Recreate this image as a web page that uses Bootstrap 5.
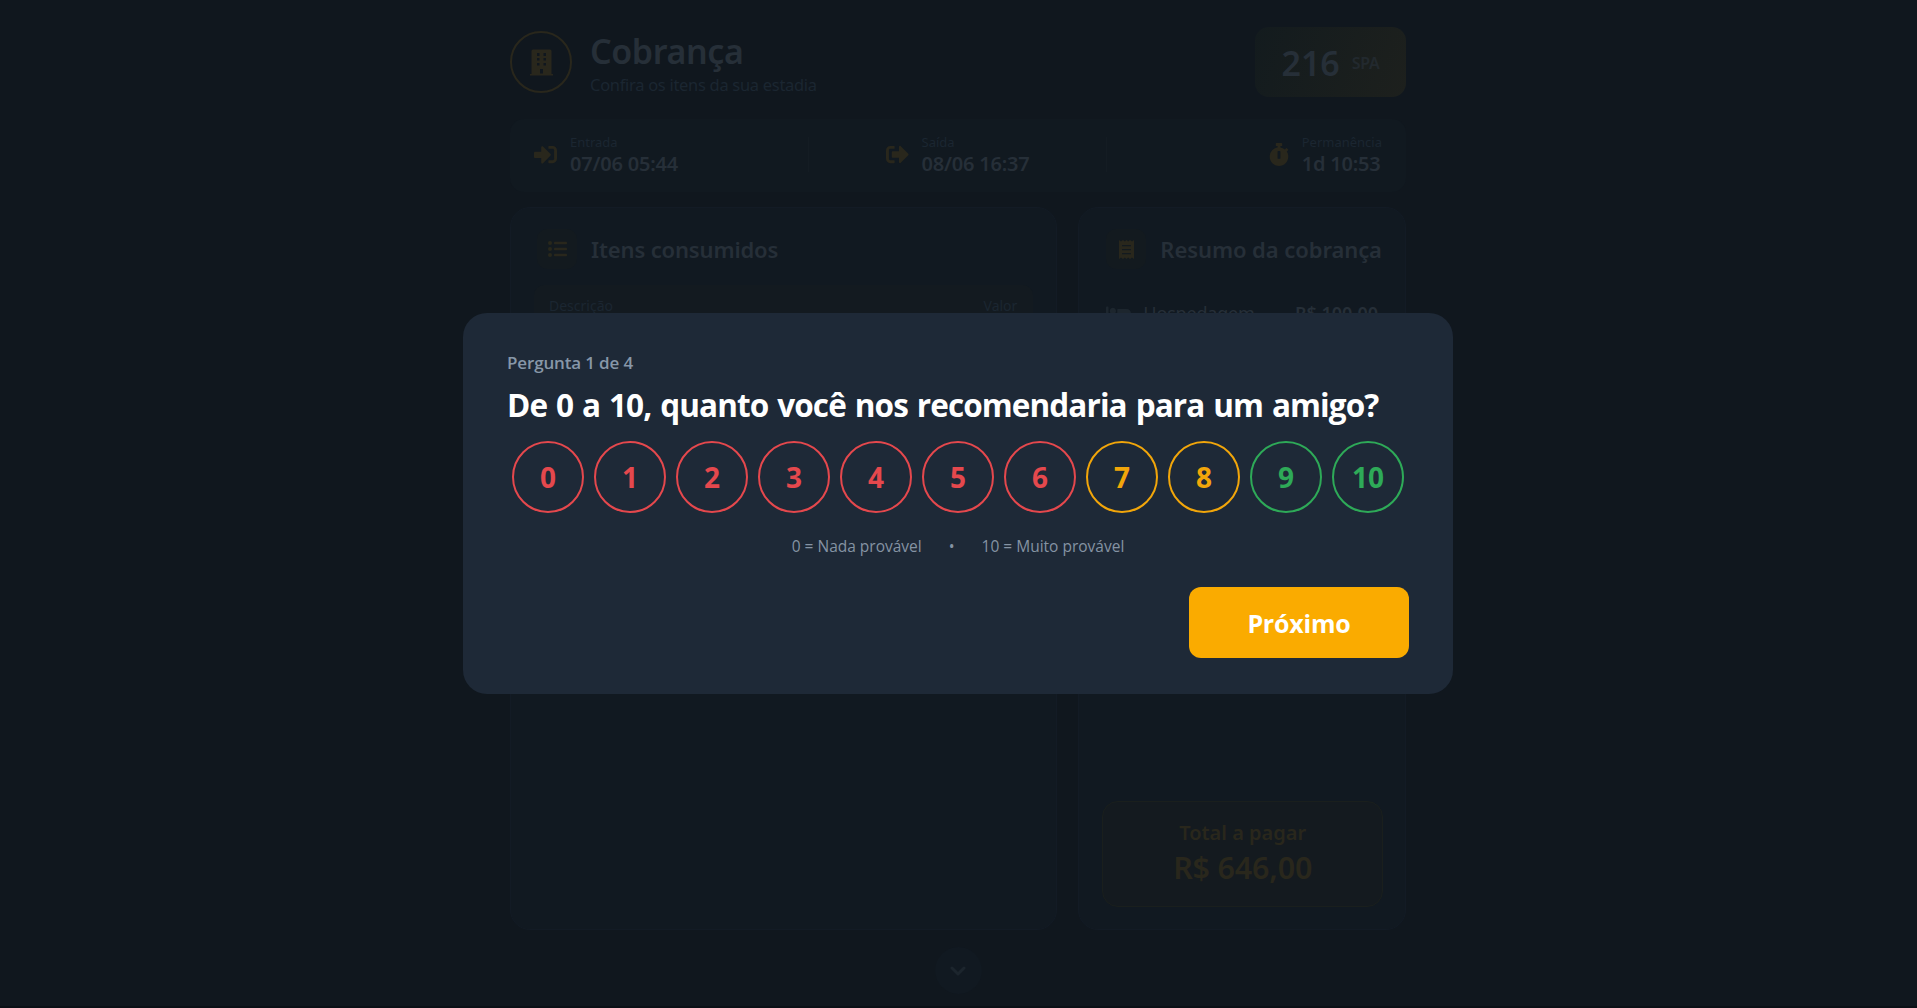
<!DOCTYPE html>
<html lang="pt-BR">
<head>
<meta charset="utf-8">
<meta name="viewport" content="width=device-width, initial-scale=1">
<title>Cobrança</title>
<link href="https://cdn.jsdelivr.net/npm/bootstrap@5.3.0/dist/css/bootstrap.min.css" rel="stylesheet">
<style>
body{background:#10171e;font-family:"Noto Sans","Open Sans",sans-serif;color:#262f38;height:100vh;overflow:hidden;border-bottom:2px solid #0b1016}
.page-wrap{width:897px;padding:27px 1px 0 0}
.gold{color:#29271c}
.dim{color:#1b2631}
.lh-1x{line-height:1;white-space:nowrap}
.logo-ring{width:62px;height:62px;border:2px solid #29271c}
.head-text{margin-left:18px;padding-top:2px}
.page-title{font-size:34px;font-weight:600;line-height:44px;letter-spacing:-.4px}
.page-sub{font-size:16.500px;line-height:24px;letter-spacing:-.3px}
.room-pill{width:151px;height:70px;gap:12px;border-radius:14px;background:linear-gradient(110deg,#131b1e,#1d201d);padding-top:1px}
.room-no{font-size:34px;font-weight:600}
.room-kind{font-size:16px;font-weight:600;letter-spacing:-.3px;color:#22292e}
.info-bar{height:73px;margin-top:22px;border-radius:14px;background:#111920;padding:0 24px 2px}
.info-mid{width:299px;margin-left:130px;margin-right:auto}
.info-item{gap:13px}
.info-label{font-size:13px;line-height:18px}
.info-value{font-size:20px;font-weight:600;line-height:26px;letter-spacing:-.2px}
.vline{width:1px;height:35px;background:#141c23}
.panels{margin-top:15px;height:723px;gap:21px}
.panel{border:1px solid #131b25;border-radius:20px;background:#111921;padding:21px 23px 22px}
.panel-a{width:548px}
.panel-b{width:328px;padding-right:22px}
.panel-head{gap:14px;padding-left:3px}
.panel-b .panel-head{padding-left:4px}
.panel-icon{width:40px;height:40px;flex:none;border-radius:10px;background:#131a1f}
.panel-title{font-size:22px;font-weight:600;white-space:nowrap;letter-spacing:-.08px}
.panel-a .panel-title{letter-spacing:-.15px}
.thead-strip{height:41px;border-radius:10px;background:#131a20;padding:0 16px 0 15px;font-size:14px;margin-top:16px}
.host-row{font-size:18px;margin-top:31px;padding:0 5px 0 4px}
.host-name{letter-spacing:-.2px}
.total-box{height:106px;border:1px solid #1a1f1d;border-radius:16px;background:#141a1f;color:#29271c;padding-bottom:3px}
.total-label{font-size:20px;font-weight:600;line-height:29px}
.total-value{font-size:30.500px;font-weight:600;line-height:40px;letter-spacing:-.2px}
.down-btn{width:47px;height:47px;background:#111921;margin-top:17px;color:#1c252d}
.shade{inset:0;padding:0 1px 2px 0}
.survey{width:990px;height:381px;border-radius:24px;background:#1e2937;padding:38px 44px 35px;font-family:"Open Sans","Noto Sans",sans-serif}
.survey>*{flex:none}
.step{font-size:17px;font-weight:600;color:#8797a8;line-height:24px;letter-spacing:-.15px}
.ask{font-size:31.500px;font-weight:700;color:#fff;line-height:40px;margin-top:10px;letter-spacing:-.9px;word-spacing:1.600px}
.scores{gap:10px;margin-top:16px}
.score{width:72px;height:72px;flex:none;border:2px solid;font-size:28px;font-weight:700}
.bad{color:#e5484d}.mid{color:#f2a60a}.good{color:#2eaa58}
.legend-row{font-size:15.500px;line-height:24px;color:#8593a3;margin-top:21px;gap:27px}
.next-btn,.next-btn:hover{width:220px;height:71px;margin-top:29px;border:0;border-radius:12px;background:#faab00;color:#fff;font-size:25px;font-weight:700;letter-spacing:-.2px;padding-top:9px}
</style>
</head>
<body>
<main class="page-wrap mx-auto">
  <header class="d-flex justify-content-between align-items-center">
    <div class="d-flex align-items-center">
      <div class="logo-ring rounded-circle gold d-flex align-items-center justify-content-center">
        <svg width="23" height="27" viewBox="0 0 23 27" fill="currentColor"><path fill-rule="evenodd" d="M3 .5h17q1.500 0 1.500 1.500V25H23v1.500H0V25h1.500V2Q1.500 .5 3 .5zM7 4v3h2.500V4zm6.500 0v3H16V4zM7 9v2.500h2.500V9zm6.500 0v2.500H16V9zM7 14v2.500h2.500V14zm6.500 0v2.500H16V14zM10 20v4.500h3V20z"/></svg>
      </div>
      <div class="head-text">
        <div class="page-title text-nowrap">Cobrança</div>
        <div class="page-sub dim text-nowrap">Confira os itens da sua estadia</div>
      </div>
    </div>
    <div class="room-pill d-flex align-items-center justify-content-center">
      <span class="room-no lh-1x">216</span><span class="room-kind lh-1x">SPA</span>
    </div>
  </header>
  <section class="info-bar d-flex align-items-center justify-content-between">
    <div class="info-item d-flex align-items-center">
      <svg class="gold" width="23" height="23" viewBox="0 0 512 512" fill="currentColor"><path d="M416 448h-84c-6.600 0-12-5.400-12-12v-40c0-6.600 5.400-12 12-12h84c17.700 0 32-14.300 32-32V160c0-17.700-14.300-32-32-32h-84c-6.600 0-12-5.400-12-12V76c0-6.600 5.400-12 12-12h84c53 0 96 43 96 96v192c0 53-43 96-96 96zm-47-201L201 79c-15-15-41-4.500-41 17v96H24c-13.300 0-24 10.700-24 24v96c0 13.300 10.700 24 24 24h136v96c0 21.500 26 32 41 17l168-168c9.300-9.400 9.300-24.600 0-34z"/></svg>
      <div><div class="info-label dim">Entrada</div><div class="info-value">07/06 05:44</div></div>
    </div>
    <div class="info-mid d-flex align-items-center justify-content-between">
      <div class="vline"></div>
      <div class="info-item d-flex align-items-center">
        <svg class="gold" width="23" height="23" viewBox="0 0 512 512" fill="currentColor"><path d="M497 273L329 441c-15 15-41 4.500-41-17v-96H152c-13.300 0-24-10.700-24-24v-96c0-13.300 10.700-24 24-24h136V88c0-21.400 25.900-32 41-17l168 168c9.300 9.400 9.300 24.600 0 34zM192 436v-40c0-6.600-5.400-12-12-12H96c-17.700 0-32-14.300-32-32V160c0-17.700 14.300-32 32-32h84c6.600 0 12-5.400 12-12V76c0-6.600-5.400-12-12-12H96c-53 0-96 43-96 96v192c0 53 43 96 96 96h84c6.600 0 12-5.400 12-12z"/></svg>
        <div><div class="info-label dim">Saída</div><div class="info-value">08/06 16:37</div></div>
      </div>
      <div class="vline"></div>
    </div>
    <div class="info-item d-flex align-items-center">
      <svg class="gold" width="20" height="23" viewBox="0 0 448 512" fill="currentColor"><path d="M432 304c0 114.900-93.100 208-208 208S16 418.900 16 304c0-104 76.300-190.200 176-205.500V64h-28c-6.600 0-12-5.400-12-12V12c0-6.600 5.400-12 12-12h120c6.600 0 12 5.400 12 12v40c0 6.600-5.400 12-12 12h-28v34.500c37.500 5.800 71.700 21.600 99.700 44.600l27.500-27.500c4.700-4.700 12.300-4.700 17 0l28.300 28.300c4.700 4.700 4.700 12.300 0 17l-30 30C419.700 223.300 432 262.200 432 304zm-176 36V188.500c0-6.600-5.400-12-12-12h-40c-6.600 0-12 5.400-12 12V340c0 6.600 5.400 12 12 12h40c6.600 0 12-5.400 12-12z"/></svg>
      <div><div class="info-label dim">Permanência</div><div class="info-value">1d 10:53</div></div>
    </div>
  </section>
  <section class="panels d-flex">
    <div class="panel panel-a">
      <div class="panel-head d-flex align-items-center">
        <div class="panel-icon gold d-flex align-items-center justify-content-center">
          <svg width="19" height="16" viewBox="0 0 19 16" fill="currentColor"><circle cx="2" cy="2" r="2"/><circle cx="2" cy="8" r="2"/><circle cx="2" cy="14" r="2"/><rect x="6" y=".7" width="13" height="2.600" rx=".8"/><rect x="6" y="6.700" width="13" height="2.600" rx=".8"/><rect x="6" y="12.700" width="13" height="2.600" rx=".8"/></svg>
        </div>
        <span class="panel-title">Itens consumidos</span>
      </div>
      <div class="thead-strip dim d-flex align-items-center justify-content-between"><span>Descrição</span><span>Valor</span></div>
    </div>
    <div class="panel panel-b d-flex flex-column">
      <div class="panel-head d-flex align-items-center">
        <div class="panel-icon gold d-flex align-items-center justify-content-center">
          <svg width="15" height="19" viewBox="0 0 15 19" fill="currentColor"><path fill-rule="evenodd" d="M0 0l2 1.500L4 0l1.800 1.500L7.500 0l1.700 1.500L11 0l2 1.500L15 0v19l-2-1.500L11 19l-1.800-1.500L7.500 19l-1.700-1.500L4 19l-2-1.500L0 19zM3 5v1.200h9V5zm0 4v1.200h9V9zm0 4v1.200h9V13z"/></svg>
        </div>
        <span class="panel-title">Resumo da cobrança</span>
      </div>
      <div class="host-row d-flex align-items-center justify-content-between">
        <span class="d-flex align-items-center gap-2"><svg width="25" height="20" viewBox="0 0 640 512" fill="#1d262e"><path d="M176 256c44.100 0 80-35.900 80-80s-35.900-80-80-80-80 35.900-80 80 35.900 80 80 80zm352-128H304c-8.800 0-16 7.200-16 16v144H64V80c0-8.800-7.200-16-16-16H16C7.200 64 0 71.200 0 80v352c0 8.800 7.200 16 16 16h32c8.800 0 16-7.200 16-16v-48h512v48c0 8.800 7.200 16 16 16h32c8.800 0 16-7.200 16-16V240c0-61.900-50.100-112-112-112z"/></svg><span class="host-name ms-1">Hospedagem</span></span>
        <span class="fw-semibold">R$ 100,00</span>
      </div>
      <div class="total-box mt-auto d-flex flex-column align-items-center justify-content-center">
        <div class="total-label">Total a pagar</div>
        <div class="total-value">R$ 646,00</div>
      </div>
    </div>
  </section>
  <div class="down-btn rounded-circle mx-auto d-flex align-items-center justify-content-center">
    <svg width="16" height="10" viewBox="0 0 16 10" fill="none" stroke="currentColor" stroke-width="3" stroke-linecap="round" stroke-linejoin="round"><path d="M2 2l6 6 6-6"/></svg>
  </div>
</main>
<div class="shade position-fixed d-flex align-items-center justify-content-center">
  <div class="survey d-flex flex-column" role="dialog">
    <div class="step text-nowrap">Pergunta 1 de 4</div>
    <div class="ask text-nowrap">De 0 a 10, quanto você nos recomendaria para um amigo?</div>
    <div class="scores d-flex justify-content-center">
      <div class="score bad rounded-circle d-flex align-items-center justify-content-center">0</div>
      <div class="score bad rounded-circle d-flex align-items-center justify-content-center">1</div>
      <div class="score bad rounded-circle d-flex align-items-center justify-content-center">2</div>
      <div class="score bad rounded-circle d-flex align-items-center justify-content-center">3</div>
      <div class="score bad rounded-circle d-flex align-items-center justify-content-center">4</div>
      <div class="score bad rounded-circle d-flex align-items-center justify-content-center">5</div>
      <div class="score bad rounded-circle d-flex align-items-center justify-content-center">6</div>
      <div class="score mid rounded-circle d-flex align-items-center justify-content-center">7</div>
      <div class="score mid rounded-circle d-flex align-items-center justify-content-center">8</div>
      <div class="score good rounded-circle d-flex align-items-center justify-content-center">9</div>
      <div class="score good rounded-circle d-flex align-items-center justify-content-center">10</div>
    </div>
    <div class="legend-row d-flex justify-content-center"><span>0 = Nada provável</span><span>•</span><span>10 = Muito provável</span></div>
    <button class="next-btn btn ms-auto">Próximo</button>
  </div>
</div>
<script src="https://cdn.jsdelivr.net/npm/bootstrap@5.3.0/dist/js/bootstrap.bundle.min.js"></script>
</body>
</html>
